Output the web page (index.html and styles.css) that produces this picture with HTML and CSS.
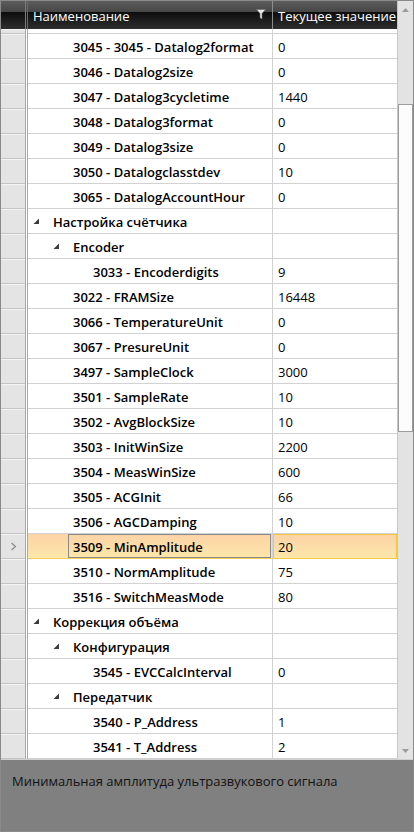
FILE: index.html
```html
<!DOCTYPE html>
<html lang="ru">
<head>
<meta charset="utf-8">
<title>Параметры</title>
<link rel="stylesheet" href="styles.css">
</head>
<body>
<div class="frame">
  <div class="main">
    <div class="table">
      <div class="head">
        <div class="hc corner"></div>
        <div class="hgut"></div>
        <div class="hc hname">
          <span class="htxt">Наименование</span>
          <svg class="funnel" width="10" height="11" viewBox="0 0 10 11"><polygon points="0.5,0.5 9.5,0.5 6,4.5 6,10 4,8.8 4,4.5" fill="#e8e8e8" stroke="#6a6a6a" stroke-width="0.6"/></svg>
        </div>
        <div class="hc hval"><span class="htxt">Текущее значение</span></div>
      </div>
      <div class="viewport">
        <div class="rows">
          <div class="row partial"><div class="rh"></div><div class="gut"></div><div class="name d1"></div><div class="val"></div></div>
          <div class="row"><div class="rh"></div><div class="gut"></div><div class="name d1"><span class="tg"></span><span class="lbl">3045 - 3045 - Datalog2format</span></div><div class="val">0</div></div>
          <div class="row"><div class="rh"></div><div class="gut"></div><div class="name d1"><span class="tg"></span><span class="lbl">3046 - Datalog2size</span></div><div class="val">0</div></div>
          <div class="row"><div class="rh"></div><div class="gut"></div><div class="name d1"><span class="tg"></span><span class="lbl">3047 - Datalog3cycletime</span></div><div class="val">1440</div></div>
          <div class="row"><div class="rh"></div><div class="gut"></div><div class="name d1"><span class="tg"></span><span class="lbl">3048 - Datalog3format</span></div><div class="val">0</div></div>
          <div class="row"><div class="rh"></div><div class="gut"></div><div class="name d1"><span class="tg"></span><span class="lbl">3049 - Datalog3size</span></div><div class="val">0</div></div>
          <div class="row"><div class="rh"></div><div class="gut"></div><div class="name d1"><span class="tg"></span><span class="lbl">3050 - Datalogclasstdev</span></div><div class="val">10</div></div>
          <div class="row"><div class="rh"></div><div class="gut"></div><div class="name d1"><span class="tg"></span><span class="lbl">3065 - DatalogAccountHour</span></div><div class="val">0</div></div>
          <div class="row"><div class="rh"></div><div class="gut"></div><div class="name d0"><span class="tg"><svg width="7" height="7" viewBox="0 0 7 7"><polygon points="6,0.5 6,6 0.5,6" fill="#3c3c3c"/></svg></span><span class="lbl">Настройка счётчика</span></div><div class="val"></div></div>
          <div class="row"><div class="rh"></div><div class="gut"></div><div class="name d1"><span class="tg"><svg width="7" height="7" viewBox="0 0 7 7"><polygon points="6,0.5 6,6 0.5,6" fill="#3c3c3c"/></svg></span><span class="lbl">Encoder</span></div><div class="val"></div></div>
          <div class="row"><div class="rh"></div><div class="gut"></div><div class="name d2"><span class="tg"></span><span class="lbl">3033 - Encoderdigits</span></div><div class="val">9</div></div>
          <div class="row"><div class="rh"></div><div class="gut"></div><div class="name d1"><span class="tg"></span><span class="lbl">3022 - FRAMSize</span></div><div class="val">16448</div></div>
          <div class="row"><div class="rh"></div><div class="gut"></div><div class="name d1"><span class="tg"></span><span class="lbl">3066 - TemperatureUnit</span></div><div class="val">0</div></div>
          <div class="row"><div class="rh"></div><div class="gut"></div><div class="name d1"><span class="tg"></span><span class="lbl">3067 - PresureUnit</span></div><div class="val">0</div></div>
          <div class="row"><div class="rh"></div><div class="gut"></div><div class="name d1"><span class="tg"></span><span class="lbl">3497 - SampleClock</span></div><div class="val">3000</div></div>
          <div class="row"><div class="rh"></div><div class="gut"></div><div class="name d1"><span class="tg"></span><span class="lbl">3501 - SampleRate</span></div><div class="val">10</div></div>
          <div class="row"><div class="rh"></div><div class="gut"></div><div class="name d1"><span class="tg"></span><span class="lbl">3502 - AvgBlockSize</span></div><div class="val">10</div></div>
          <div class="row"><div class="rh"></div><div class="gut"></div><div class="name d1"><span class="tg"></span><span class="lbl">3503 - InitWinSize</span></div><div class="val">2200</div></div>
          <div class="row"><div class="rh"></div><div class="gut"></div><div class="name d1"><span class="tg"></span><span class="lbl">3504 - MeasWinSize</span></div><div class="val">600</div></div>
          <div class="row"><div class="rh"></div><div class="gut"></div><div class="name d1"><span class="tg"></span><span class="lbl">3505 - ACGInit</span></div><div class="val">66</div></div>
          <div class="row"><div class="rh"></div><div class="gut"></div><div class="name d1"><span class="tg"></span><span class="lbl">3506 - AGCDamping</span></div><div class="val">10</div></div>
          <div class="row sel"><div class="rh"><svg width="7" height="9" viewBox="0 0 7 9"><polyline points="1.5,1 5.5,4.5 1.5,8" fill="none" stroke="#8a8a8a" stroke-width="1.2"/></svg></div><div class="gut"></div><div class="name d1"><span class="tg"></span><span class="lbl">3509 - MinAmplitude</span></div><div class="val">20</div></div>
          <div class="row"><div class="rh"></div><div class="gut"></div><div class="name d1"><span class="tg"></span><span class="lbl">3510 - NormAmplitude</span></div><div class="val">75</div></div>
          <div class="row"><div class="rh"></div><div class="gut"></div><div class="name d1"><span class="tg"></span><span class="lbl">3516 - SwitchMeasMode</span></div><div class="val">80</div></div>
          <div class="row"><div class="rh"></div><div class="gut"></div><div class="name d0"><span class="tg"><svg width="7" height="7" viewBox="0 0 7 7"><polygon points="6,0.5 6,6 0.5,6" fill="#3c3c3c"/></svg></span><span class="lbl">Коррекция объёма</span></div><div class="val"></div></div>
          <div class="row"><div class="rh"></div><div class="gut"></div><div class="name d1"><span class="tg"><svg width="7" height="7" viewBox="0 0 7 7"><polygon points="6,0.5 6,6 0.5,6" fill="#3c3c3c"/></svg></span><span class="lbl">Конфигурация</span></div><div class="val"></div></div>
          <div class="row"><div class="rh"></div><div class="gut"></div><div class="name d2"><span class="tg"></span><span class="lbl">3545 - EVCCalcInterval</span></div><div class="val">0</div></div>
          <div class="row"><div class="rh"></div><div class="gut"></div><div class="name d1"><span class="tg"><svg width="7" height="7" viewBox="0 0 7 7"><polygon points="6,0.5 6,6 0.5,6" fill="#3c3c3c"/></svg></span><span class="lbl">Передатчик</span></div><div class="val"></div></div>
          <div class="row"><div class="rh"></div><div class="gut"></div><div class="name d2"><span class="tg"></span><span class="lbl">3540 - P_Address</span></div><div class="val">1</div></div>
          <div class="row"><div class="rh"></div><div class="gut"></div><div class="name d2"><span class="tg"></span><span class="lbl">3541 - T_Address</span></div><div class="val">2</div></div>
        </div>
      </div>
    </div>
    <div class="vscroll">
      <div class="sbtn"><svg width="7" height="4" viewBox="0 0 7 4"><polygon points="0,4 7,4 3.5,0" fill="#9a9a9a"/></svg></div>
      <div class="track"><div class="thumb"></div></div>
      <div class="sbtn"><svg width="7" height="4" viewBox="0 0 7 4"><polygon points="0,0 7,0 3.5,4" fill="#9a9a9a"/></svg></div>
    </div>
  </div>
  <div class="desc">Минимальная амплитуда ультразвукового сигнала</div>
</div>
</body>
</html>
```

FILE: styles.css
```css
html, body {
  margin: 0;
  padding: 0;
}

body {
  width: 414px;
  height: 832px;
  overflow: hidden;
  background: #808080;
  font-family: "Open Sans", "Noto Sans", "DejaVu Sans", sans-serif;
  font-size: 13px;
  line-height: 16px;
  color: #000;
}

.frame {
  width: 414px;
  height: 832px;
  box-sizing: border-box;
  border: 1px solid #8a8a8a;
  display: flex;
  flex-direction: column;
}

.main {
  display: flex;
  height: 758px;
  background: #fff;
}

.table {
  width: 396px;
  display: flex;
  flex-direction: column;
}

/* column header */
.head {
  display: flex;
  height: 28px;
  background: linear-gradient(#5c5c5c 0, #474747 38%, #0d0d0d 40%, #1e1e1e 70%, #2e2e2e 100%);
  color: #fff;
}

.hc {
  box-sizing: border-box;
  display: flex;
  align-items: center;
  height: 28px;
  padding-top: 2px;
}

.htxt {
  white-space: nowrap;
}

.corner {
  width: 25px;
  border-right: 1px solid #7a7a7a;
}

.hgut {
  width: 2px;
  border-right: 1px solid #6a6a6a;
  box-sizing: border-box;
}

.hname {
  width: 245px;
  padding-left: 5px;
  padding-right: 6px;
  border-right: 1px solid #8c8c8c;
}

.hname .htxt {
  flex: 1;
}

.funnel {
  margin-top: -4px;
  flex: none;
}

.hval {
  width: 124px;
  padding-left: 5px;
}

/* rows */
.viewport {
  height: 730px;
  overflow: hidden;
}

.row {
  display: flex;
  height: 25px;
}

.row.partial {
  height: 5px;
}

.rh {
  width: 24px;
  height: 24px;
  background: #e4e4e4;
  border-right: 1px solid #a9a9a9;
  border-bottom: 1px solid #c4c4c4;
  box-shadow: inset 0 1px #f4f4f4;
  display: flex;
  align-items: center;
  justify-content: center;
}

.gut {
  width: 1px;
  background: #fff;
  border-right: 1px solid #a9a9a9;
}

.name {
  height: 24px;
  border-right: 1px solid #d2d2d2;
  border-bottom: 1px solid #d2d2d2;
  display: flex;
  align-items: stretch;
  font-weight: 600;
}

.name.d0 { padding-left: 5px; width: 239px; }
.name.d1 { padding-left: 25px; width: 219px; }
.name.d2 { padding-left: 45px; width: 199px; }

.tg {
  width: 15px;
  flex: none;
  display: flex;
  align-items: center;
  padding-top: 1px;
}

.lbl {
  flex: 1;
  display: flex;
  align-items: center;
  padding-left: 4px;
  padding-top: 1px;
  border: 1px solid transparent;
  white-space: nowrap;
  overflow: hidden;
}

.val {
  width: 124px;
  height: 25px;
  box-sizing: border-box;
  padding-left: 5px;
  padding-top: 1px;
  border-bottom: 1px solid #d2d2d2;
  display: flex;
  align-items: center;
  white-space: nowrap;
}

.row.partial .rh,
.row.partial .name {
  height: 4px;
}

.row.partial .val {
  height: 5px;
  padding: 0;
}

/* current row */
.row.sel .name,
.row.sel .val {
  background: linear-gradient(#fcd3a6, #fde7aa);
  border-bottom-color: #f3cc62;
}

.row.sel .lbl {
  border-color: #8a8a8a;
  margin-right: 1px;
}

.row.sel .val {
  border: 1px solid #f2c647;
  padding-left: 4px;
  padding-top: 0;
}

/* vertical scrollbar */
.vscroll {
  width: 15px;
  border-left: 1px solid #c6c6c6;
  background: #e3e3e3;
  display: flex;
  flex-direction: column;
}

.sbtn {
  height: 17px;
  display: flex;
  align-items: center;
  justify-content: center;
}

.track {
  flex: 1;
}

.thumb {
  margin-top: 86px;
  height: 326px;
  background: #fcfcfc;
  border: 1px solid #9c9c9c;
  width: 13px;
}

/* description panel */
.desc {
  flex: 1;
  border-top: 1px solid #d0d0d0;
  background: #808080;
  color: #121212;
  padding: 13px 11px 0;
  font-size: 13px;
}
```
